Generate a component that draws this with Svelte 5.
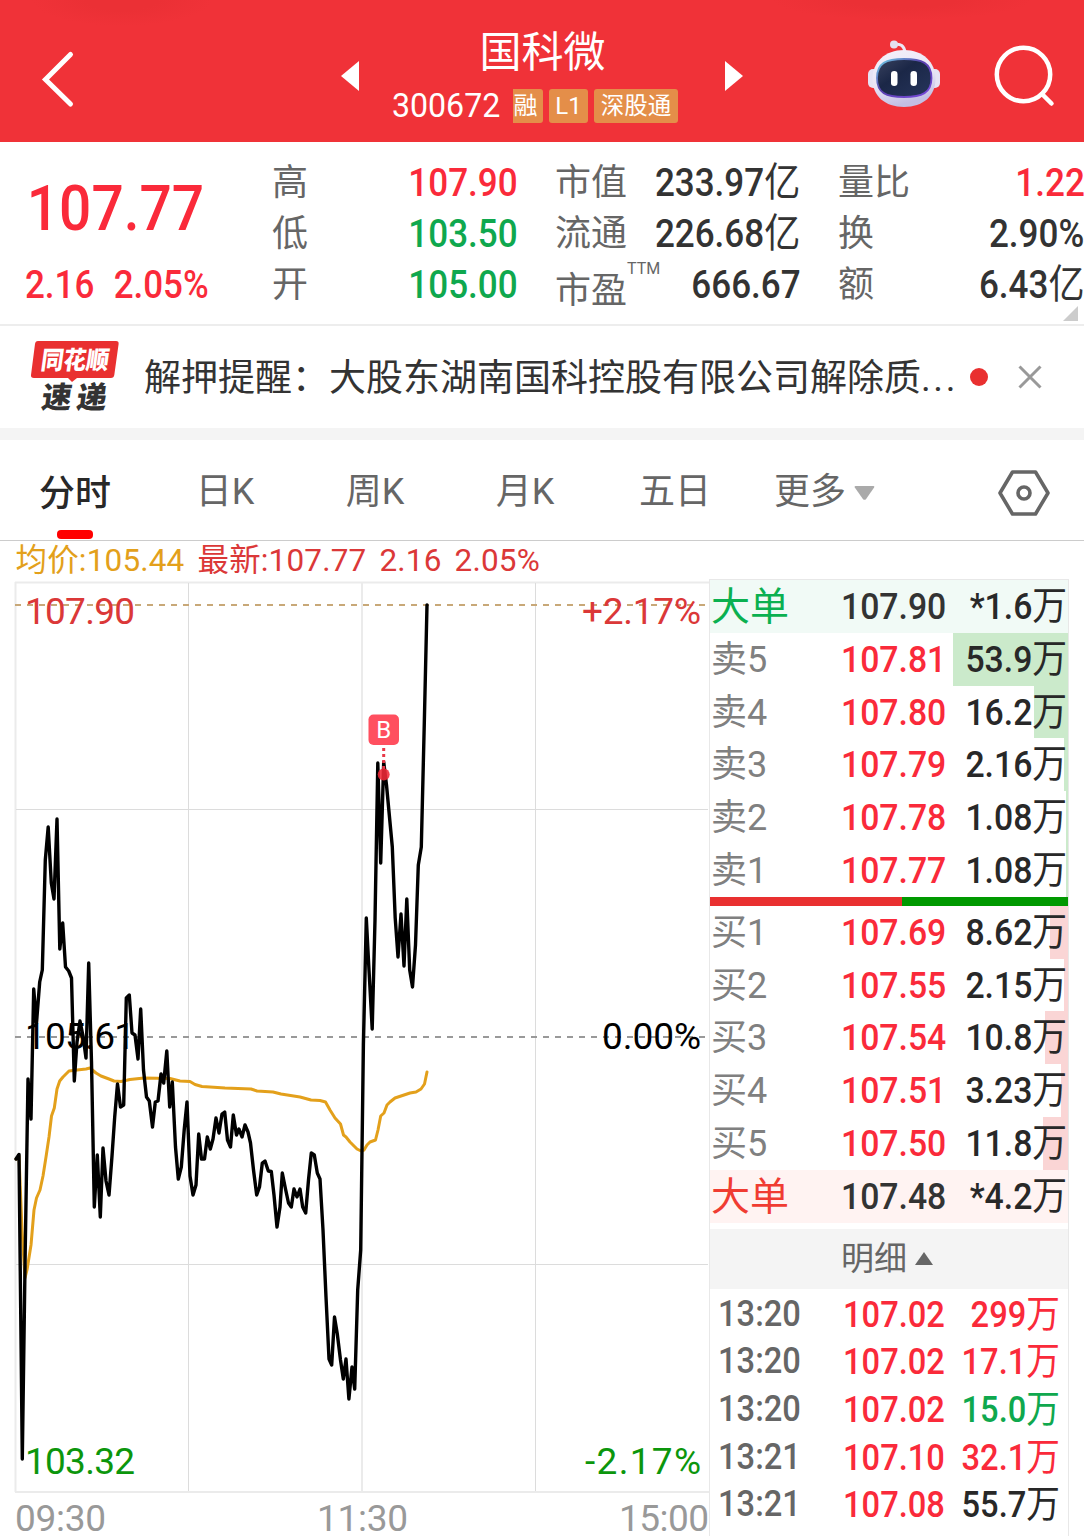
<script lang="ts">
  type Row = { name: string; price: string; vol: string; bar: number };

  const quoteCols = [
    {
      cls: 'range',
      items: [
        { label: '高', value: '107.90', unit: '', tone: 'up' },
        { label: '低', value: '103.50', unit: '', tone: 'down' },
        { label: '开', value: '105.00', unit: '', tone: 'down' },
      ],
    },
    {
      cls: 'cap',
      items: [
        { label: '市值', value: '233.97', unit: '亿', tone: '' },
        { label: '流通', value: '226.68', unit: '亿', tone: '' },
        { label: '市盈', sup: 'TTM', value: '666.67', unit: '', tone: '' },
      ],
    },
    {
      cls: 'turn',
      items: [
        { label: '量比', value: '1.22', unit: '', tone: 'up' },
        { label: '换', value: '2.90%', unit: '', tone: '' },
        { label: '额', value: '6.43', unit: '亿', tone: '' },
      ],
    },
  ];

  const tabs = ['分时', '日K', '周K', '月K', '五日'];
  let active = $state('分时');

  // volumes are in units of 万
  const asks: Row[] = [
    { name: '卖5', price: '107.81', vol: '53.9', bar: 115 },
    { name: '卖4', price: '107.80', vol: '16.2', bar: 34 },
    { name: '卖3', price: '107.79', vol: '2.16', bar: 4 },
    { name: '卖2', price: '107.78', vol: '1.08', bar: 2 },
    { name: '卖1', price: '107.77', vol: '1.08', bar: 2 },
  ];
  const bids: Row[] = [
    { name: '买1', price: '107.69', vol: '8.62', bar: 18 },
    { name: '买2', price: '107.55', vol: '2.15', bar: 4 },
    { name: '买3', price: '107.54', vol: '10.8', bar: 23 },
    { name: '买4', price: '107.51', vol: '3.23', bar: 7 },
    { name: '买5', price: '107.50', vol: '11.8', bar: 25 },
  ];

  const ticks = [
    { time: '13:20', price: '107.02', vol: '299', tone: 'up' },
    { time: '13:20', price: '107.02', vol: '17.1', tone: 'up' },
    { time: '13:20', price: '107.02', vol: '15.0', tone: 'down' },
    { time: '13:21', price: '107.10', vol: '32.1', tone: 'up' },
    { time: '13:21', price: '107.08', vol: '55.7', tone: '' },
  ];

  // minute price line, one point per minute
  const priceLine = `16,1159 19,1154.5 22.3,1459 25.2,1252 28,1079 31,1119 33.7,989 36.5,1023 39.7,982 42.3,970
    45.3,860 48.2,827 51.3,883 54,899 57,819 59.8,949 62.7,923 65.5,967 68.7,971 71.5,978
    74.3,1081 77,1042 80,1021 83,1036 86,1058 88.7,963 91.5,1062 94.3,1207 97.3,1155 100.3,1217
    103,1148 106,1181 109,1195 112,1156 114.7,1117 117.5,1084 120.5,1107 123.7,1105 126.3,998 129.3,995
    132,1033 135,1035 138,1059 140.7,1009 143.5,1070 146.5,1097 149.3,1101 152.5,1127 155.3,1102 158,1101
    161,1074 163.7,1083 166.8,1051 169.7,1107 172.3,1082 175.5,1147 178.3,1179 181.3,1167 184.2,1130 187,1102
    190,1176 193,1195 196,1185 198.7,1134 201.5,1159 204.5,1159 207.3,1137 210.3,1149 213,1139 216,1118
    219,1133 222,1114 224.7,1112 227.5,1140 230.5,1147 233.3,1115 236.5,1135 239,1129 242,1137 245,1125
    248,1132 250.5,1143 253.5,1170 256.7,1195 259.5,1187 262.3,1163 265,1161 268.3,1171 271.3,1171.5 274,1195
    277,1227 280,1207 282.3,1173 285.3,1188 288.5,1203 291.3,1207 294,1189 297,1197 300,1189 302.7,1207
    305.7,1213 308.5,1180 311.3,1153 314.3,1155 317.3,1173 320,1179 323,1230 326,1297 329,1359 331.7,1365
    334.5,1317 337.3,1334 340.5,1360 343.3,1379 346,1359 348.9,1399 352,1367 354.7,1389 357.7,1290 360.7,1250
    363.4,1045 366.3,918 369,970 372.2,1029 375,920 377.8,763 380.7,863 383.7,762 386.5,785 389.3,815
    392.3,847 395.2,918 398,957 401,914 404,966 406.8,899 409.7,970 412.5,987 415.5,945 418.3,865
    421.3,847 424.3,723 427,605`;

  const avgLine = `16,1159 19,1156 22,1230 25,1278 27,1270 31,1245 34,1210 36.5,1198 40,1190 43,1176 46,1157
    49,1137 51.5,1116 54.3,1108 57,1089 59.7,1081 63,1077 69,1071 77,1070 86,1069 90,1068 96,1073 101,1076
    109,1079 114,1081 121,1081.5 130,1079.5 144,1078 170,1078.5 180,1081 190,1081.5 195,1084.5 202,1086.5
    210,1087 225,1088 251,1089 257,1091 273,1092 281,1094 300,1097 311,1100 320,1100.5 325.5,1102 330,1110
    335,1118 340.5,1124 343.5,1135 346,1137 350,1142 357,1149 361,1151 364,1150 367,1145 370,1142
    375.5,1140 378,1130 380.7,1116 384,1113 387,1105 390,1102 395,1098 410,1093 416,1092 421,1089
    424.5,1084 427,1072`;
</script>

<div class="app">
  <header>
    <svg class="back" viewBox="0 0 34 58"><path d="M29.500 4.500 4.500 29.500 29.500 54" /></svg>
    <svg class="arrow" viewBox="0 0 18 30"><path d="M18 0v30L0 15z" /></svg>
    <div class="title">
      <div class="name">国科微</div>
      <div class="code">
        <span class="num">300672</span>
        <span class="tag first">融</span>
        <span class="tag l1">L1</span>
        <span class="tag last">深股通</span>
      </div>
    </div>
    <svg class="arrow" viewBox="0 0 18 30"><path d="M0 0v30L18 15z" /></svg>
    <svg class="robot" viewBox="0 0 72 68">
      <defs>
        <linearGradient id="shell" x1="0" y1="0" x2="0.3" y2="1">
          <stop offset="0" stop-color="#f5f1fa" />
          <stop offset="0.6" stop-color="#e9e4f5" />
          <stop offset="1" stop-color="#c3bfe4" />
        </linearGradient>
        <linearGradient id="rim" x1="0" y1="0" x2="1" y2="1">
          <stop offset="0" stop-color="#6fd6e8" />
          <stop offset="0.45" stop-color="#5a3fae" />
          <stop offset="1" stop-color="#7a4be0" />
        </linearGradient>
        <linearGradient id="visor" x1="0" y1="0" x2="1" y2="1">
          <stop offset="0" stop-color="#39425f" />
          <stop offset="0.4" stop-color="#1b2747" />
          <stop offset="1" stop-color="#26355c" />
        </linearGradient>
      </defs>
      <path d="M26 4.500q10-2 11 8" fill="none" stroke="#ece7f5" stroke-width="3" />
      <circle cx="26" cy="4.500" r="4" fill="#e4dff0" />
      <rect x="0" y="29" width="12" height="19" rx="5" fill="#e6e2f4" />
      <rect x="60" y="29" width="12" height="19" rx="5" fill="#e6e2f4" />
      <path d="M36 10C55 10 67.500 22 67.500 39 67.500 56 55 67 36 67S4.500 56 4.500 39C4.500 22 17 10 36 10z" fill="url(#shell)" />
      <path d="M36 19C54 19 63.500 23 63.500 38 63.500 53 54 57 36 57S9 53 9 38C9 23 18 19 36 19z" fill="url(#visor)" stroke="url(#rim)" stroke-width="1.800" />
      <rect x="23" y="31" width="6.500" height="15" rx="3.200" fill="#fff" />
      <rect x="42.500" y="31" width="6.500" height="15" rx="3.200" fill="#fff" />
    </svg>
    <svg class="search" viewBox="0 0 64 64">
      <circle cx="29.500" cy="30.500" r="26.700" />
      <path d="m48 50 9.500 9.500" />
    </svg>
  </header>

  <section class="quote">
    <div class="last">
      <div class="big up">107.77</div>
      <div class="change up"><span>2.16</span><span>2.05%</span></div>
    </div>
    {#each quoteCols as col}
      <div class="col {col.cls}">
        {#each col.items as item}
          <div class="item">
            <span class="label" class:low={item.sup}>{item.label}{#if item.sup}<sup>{item.sup}</sup>{/if}</span>
            <span class="value {item.tone}">{item.value}<em>{item.unit}</em></span>
          </div>
        {/each}
      </div>
    {/each}
    <i class="corner"></i>
  </section>

  <section class="news">
    <div class="logo">
      <svg viewBox="0 0 90 74">
        <path d="M8 1h78q3 0 2.600 3l-4.300 31q-.4 3-3.400 3H47l-5 4-4-4H4q-3.400 0-3-3L5 4q.4-3 3-3z" fill="#e93030" />
        <text x="14" y="29" class="brand" textLength="68" lengthAdjust="spacingAndGlyphs" transform="skewX(-8)">同花顺</text>
        <text x="20" y="68" class="sub" textLength="65" lengthAdjust="spacing" transform="skewX(-8)">速递</text>
      </svg>
    </div>
    <p>解押提醒：大股东湖南国科控股有限公司解除质<span class="dots">...</span></p>
    <i class="dot"></i>
    <svg class="close" viewBox="0 0 24 24"><path d="m1.500 1.500 21 21m0-21-21 21" /></svg>
  </section>

  <nav>
    {#each tabs as tab}
      <button class:active={tab === active} onclick={() => (active = tab)}>{tab}</button>
    {/each}
    <button class="more">更多<svg viewBox="0 0 21 14"><path d="M1.500 0h18q1.500 0 .6 1.600l-8 11.400q-1.600 1.700-3.200 0L.8 1.600Q0 0 1.500 0z" /></svg></button>
    <svg class="setting" viewBox="0 0 52 46">
      <path d="M14.500 2h23L50 23 37.500 44h-23L2 23z" />
      <circle cx="26" cy="23" r="6" />
    </svg>
  </nav>

  <div class="info">
    <span class="avg">均价:105.44</span><span class="now">最新:107.77</span><span class="now">2.16</span><span class="now">2.05%</span>
  </div>

  <main>
    <svg class="chart" viewBox="0 580 709 956">
      <g class="edge">
        <path d="M15.500 582V1492M15 582.500H709M15 1492H709M362 582V1492" />
      </g>
      <g class="grid">
        <path d="M188.500 583V1491M535.500 583V1491M16 809.500H708M16 1264.500H708" />
      </g>
      <path class="dash top" d="M15 605H709" />
      <path class="dash" d="M15 1037H709" />
      <polyline class="avg-line" points={avgLine} />
      <polyline class="price-line" points={priceLine} />

      <g class="marker">
        <rect x="368.500" y="714.500" width="30.500" height="30.500" rx="5" />
        <text x="383.700" y="738" text-anchor="middle">B</text>
        <path d="M383.700 748V770" />
        <circle cx="383.700" cy="774.500" r="6" />
      </g>

      <g class="axis">
        <text class="red" x="25" y="624" textLength="110">107.90</text>
        <text class="red" x="582" y="624" textLength="119">+2.17%</text>
        <text x="25" y="1049" textLength="110">105.61</text>
        <text x="602" y="1049" textLength="99">0.00%</text>
        <text class="green" x="25" y="1474" textLength="110">103.32</text>
        <text class="green" x="585" y="1474" textLength="116">-2.17%</text>
        <text class="time" x="15" y="1531" textLength="91">09:30</text>
        <text class="time" x="317" y="1531" textLength="91">11:30</text>
        <text class="time" x="619" y="1531" textLength="90">15:00</text>
      </g>
    </svg>

    <aside>
      <div class="row large sell">
        <span class="side">大单</span><span class="price">107.90</span><span class="vol">*1.6<em>万</em></span>
      </div>
      {#each asks as row}
        <div class="row">
          <i class="bar" style="width: {row.bar}px"></i>
          <span class="side">{row.name}</span><span class="price up">{row.price}</span><span class="vol">{row.vol}<em>万</em></span>
        </div>
      {/each}
      <div class="ratio"><i></i></div>
      {#each bids as row}
        <div class="row">
          <i class="bar bid" style="width: {row.bar}px"></i>
          <span class="side">{row.name}</span><span class="price up">{row.price}</span><span class="vol">{row.vol}<em>万</em></span>
        </div>
      {/each}
      <div class="row large buy">
        <span class="side">大单</span><span class="price">107.48</span><span class="vol">*4.2<em>万</em></span>
      </div>
      <div class="detail">明细<svg viewBox="0 0 18 13"><path d="M9 0l9 13H0z" /></svg></div>
      {#each ticks as t}
        <div class="tick">
          <span class="at">{t.time}</span><span class="price up">{t.price}</span><span class="vol {t.tone}">{t.vol}<em>万</em></span>
        </div>
      {/each}
    </aside>
  </main>
</div>

<style>
  :global(body) {
    background: #fff;
  }
  .app {
    width: 1084px;
    height: 1536px;
    overflow: hidden;
    background: #fff;
    color: #333;
    font-family: Roboto, "Noto Sans CJK SC", sans-serif;
  }
  .app :global(*) {
    box-sizing: border-box;
  }
  svg {
    display: block;
    flex: none;
    overflow: visible;
  }
  em {
    font-style: normal;
    font-weight: 400;
    font-size: 1.03em;
    line-height: 1;
  }
  .up {
    color: #fa2a3a !important;
  }
  .down {
    color: #0fa84e !important;
  }

  header {
    display: flex;
    align-items: flex-start;
    height: 142px;
    background:
      radial-gradient(ellipse 90px 26px at 122px 0, #eb3035 40%, transparent),
      radial-gradient(ellipse 130px 20px at 902px 0, #eb3035 40%, transparent),
      #f03238;
    color: #fff;
  }
  .back {
    width: 34px;
    height: 58px;
    margin: 50px 266px 0 41px;
    fill: none;
    stroke: #fff;
    stroke-width: 5;
    stroke-linecap: round;
  }
  .arrow {
    width: 18px;
    height: 30px;
    margin-top: 61px;
    fill: #fff;
  }
  .title {
    width: 366px;
    padding-top: 28px;
  }
  .name {
    height: 50px;
    font-size: 42px;
    line-height: 50px;
    text-align: center;
    padding-left: 1px;
  }
  .code {
    display: flex;
    height: 34px;
    margin: 11px 0 0 32px;
    gap: 6px;
  }
  .num {
    width: 116px;
    font-size: 34px;
    line-height: 32px;
    transform: scaleX(0.945);
    transform-origin: 0 0;
    padding-left: 1px;
  }
  .tag {
    height: 34px;
    border-radius: 3px;
    background: #e48e49;
    font-size: 24px;
    line-height: 34px;
    text-align: center;
    white-space: nowrap;
  }
  .first {
    width: 30px;
    border-radius: 0 3px 3px 0;
    text-indent: -5px;
  }
  .l1 {
    width: 39px;
  }
  .last.tag {
    width: 84px;
    font-size: 23.5px;
  }
  .robot {
    width: 72px;
    height: 68px;
    margin: 40px 0 0 125px;
  }
  .search {
    width: 64px;
    height: 64px;
    margin: 44px 0 0 53.5px;
    fill: none;
    stroke: #fff;
    stroke-width: 4.5;
    stroke-linecap: round;
  }

  .quote {
    position: relative;
    display: flex;
    height: 184px;
    padding-top: 15px;
    border-bottom: 2px solid #ededed;
  }
  .quote .last {
    width: 272px;
    padding-left: 25px;
  }
  .big {
    height: 102px;
    font-size: 63.5px;
    font-weight: 500;
    line-height: 104px;
    transform: scaleX(0.895);
    transform-origin: 0 0;
    text-indent: 2px;
  }
  .change {
    display: flex;
    gap: 21px;
    height: 50px;
    font-size: 38px;
    font-weight: 500;
    line-height: 52px;
    transform: scaleX(0.92);
    transform-origin: 0 0;
  }
  .col {
    display: flex;
    flex-direction: column;
  }
  .range {
    width: 245px;
    margin-right: 38px;
  }
  .cap {
    width: 245px;
    margin-right: 38px;
  }
  .turn {
    width: 246px;
  }
  .item {
    display: flex;
    justify-content: space-between;
    height: 51px;
    line-height: 51px;
    white-space: nowrap;
  }
  .label {
    font-size: 36px;
    color: #666;
    padding-top: 1px;
  }
  .low {
    padding-top: 7px;
  }
  sup {
    position: relative;
    top: -29px;
    font-size: 16px;
    line-height: 0;
    vertical-align: baseline;
  }
  .value {
    font-size: 38.5px;
    font-weight: 500;
    transform: translateX(0.5px) scaleX(0.91);
    transform-origin: 100% 0;
  }
  .corner {
    position: absolute;
    right: 6px;
    bottom: 3px;
    border-left: 15px solid transparent;
    border-bottom: 15px solid #ccc;
  }

  .news {
    display: flex;
    align-items: center;
    height: 114px;
    padding-left: 30px;
    border-bottom: 12px solid #f4f4f4;
  }
  .logo svg {
    width: 90px;
    height: 74px;
  }
  .brand,
  .sub {
    font-size: 25px;
    font-weight: 900;
  }
  .brand {
    fill: #fff;
  }
  .sub {
    fill: #333;
    font-size: 30px;
  }
  .news p {
    width: 838px;
    margin: 4px 0 0 24px;
    font-size: 37px;
    line-height: 50px;
    white-space: nowrap;
  }
  .dots {
    letter-spacing: 2.6px;
  }
  .dot {
    width: 18px;
    height: 18px;
    margin: 0 30px 0 -12px;
    border-radius: 50%;
    background: #e93030;
  }
  .close {
    width: 24px;
    height: 24px;
    fill: none;
    stroke: #999;
    stroke-width: 3;
  }

  nav {
    display: flex;
    height: 101px;
    border-bottom: 1px solid #ccc;
  }
  button {
    width: 150px;
    padding: 4px 0 0;
    border: 0;
    background: none;
    color: #666;
    font: 400 36px/96px Roboto, "Noto Sans CJK SC", sans-serif;
  }
  .active {
    color: #282828;
    font-weight: 500;
  }
  .active::after {
    content: "";
    display: block;
    width: 36px;
    height: 9px;
    margin: -12px auto 0;
    border-radius: 4px;
    background: #f00;
  }
  .more {
    display: flex;
    align-items: center;
    width: 248px;
    padding-left: 24px;
  }
  .more svg {
    width: 21px;
    height: 14px;
    margin: 2px 0 0 8px;
    fill: #aaa;
  }
  .setting {
    width: 52px;
    height: 46px;
    margin-top: 30px;
    fill: none;
    stroke: #666;
    stroke-width: 3.6;
    stroke-linejoin: round;
  }

  .info {
    display: flex;
    gap: 13px;
    height: 39px;
    padding-left: 15.5px;
    font-size: 31.5px;
    line-height: 39px;
    letter-spacing: 0.17px;
  }
  .avg {
    color: #e3a01b;
  }
  .now {
    color: #db3838;
  }

  main {
    display: flex;
    height: 956px;
  }
  .chart {
    width: 709px;
    height: 956px;
  }
  .edge path {
    stroke: #ebebeb;
    stroke-width: 2;
  }
  .grid path {
    stroke: #dcdcdc;
  }
  .dash {
    stroke: #999;
    stroke-width: 2;
    stroke-dasharray: 6 6;
  }
  .dash.top {
    stroke: #c8a878;
  }
  polyline {
    fill: none;
    stroke-linejoin: round;
    stroke-linecap: round;
  }
  .avg-line {
    stroke: #e3a01b;
    stroke-width: 3;
  }
  .price-line {
    stroke: #000;
    stroke-width: 3.4;
  }
  .marker rect {
    fill: #ff4f5f;
  }
  .marker text {
    fill: #fff;
    font-size: 24px;
  }
  .marker path {
    stroke: #e83848;
    stroke-width: 3;
    stroke-dasharray: 3 3;
  }
  .marker circle {
    fill: #f02838;
    fill-opacity: 0.88;
  }
  .axis {
    font-size: 37px;
  }
  .axis .red {
    fill: #db3838;
  }
  .axis .green {
    fill: #0c960c;
  }
  .axis .time {
    fill: #999;
  }

  aside {
    width: 360px;
    height: 958px;
    margin-top: -1px;
    border: 1px solid #e8e8e8;
    border-bottom: 0;
  }
  .row {
    position: relative;
    display: flex;
    height: 52.8px;
    font-size: 37.5px;
    line-height: 52px;
    white-space: nowrap;
  }
  .bar {
    position: absolute;
    top: 0;
    right: 0;
    height: 100%;
    background: #cbeacb;
  }
  .bar.bid {
    background: #fad5d5;
  }
  .side {
    width: 131px;
    padding-left: 1px;
    color: #808080;
    font-size: 36px;
    line-height: 54px;
  }
  .price {
    width: 105px;
    font-weight: 500;
    transform: scaleX(0.9);
    transform-origin: 0 0;
  }
  .vol {
    position: relative;
    flex: 1;
    padding-right: 1px;
    color: #282828;
    font-weight: 500;
    text-align: right;
    transform: scaleX(0.9);
    transform-origin: 100% 0;
  }
  .large .side {
    font-size: 39px;
  }
  .sell {
    background: #f1faf6;
  }
  .sell .side {
    color: #0bb050;
  }
  .buy {
    background: #fff3f2;
  }
  .buy .side {
    color: #f03c32;
  }
  .ratio {
    height: 9px;
    background: #090;
  }
  .ratio i {
    display: block;
    width: 192px;
    height: 9px;
    background: #e93030;
  }
  .detail {
    display: flex;
    align-items: center;
    height: 60px;
    margin: 6px 0 1px;
    padding-left: 131px;
    background: #f4f4f4;
    color: #666;
    font-size: 33px;
    line-height: 60px;
  }
  .detail svg {
    width: 18px;
    height: 13px;
    margin-left: 8px;
    fill: #666;
  }
  .tick {
    display: flex;
    height: 47.7px;
    font-size: 36.5px;
    line-height: 49px;
    white-space: nowrap;
  }
  .at {
    width: 125px;
    margin: 0 0 0 8px;
    color: #666;
    font-weight: 500;
    line-height: 47px;
    transform: scaleX(0.895);
    transform-origin: 0 0;
  }
  .tick .vol {
    padding-right: 9px;
  }
  .tick .price,
  .tick .vol {
    transform: scaleX(0.895);
  }
</style>
